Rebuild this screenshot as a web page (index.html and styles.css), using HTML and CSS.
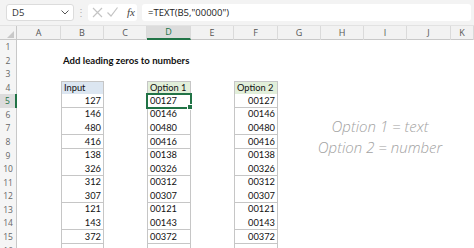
FILE: index.html
```html
<!DOCTYPE html>
<html lang="en">
<head>
    <meta charset="UTF-8">
    <title>Add leading zeros to numbers</title>
    <link rel="stylesheet" href="styles.css">
</head>
<body>
    <div class="window">
        <div class="formula-bar">
            <div class="name-box">
                <span>D5</span>
                <svg class="chev" width="8" height="5" viewBox="0 0 8 5"><path d="M0.5 0.5 L4 4 L7.5 0.5" fill="none" stroke="#555" stroke-width="1"/></svg>
            </div>
            <div class="grip">⋮</div>
            <div class="fx-tools">
                <svg width="11" height="11" viewBox="0 0 11 11"><path d="M1 1 L10 10 M10 1 L1 10" stroke="#c4c4c4" stroke-width="1.2"/></svg>
                <svg width="11" height="10" viewBox="0 0 11 10"><path d="M0.5 5.5 L4 9 L10.5 0.5" fill="none" stroke="#c4c4c4" stroke-width="1.2"/></svg>
                <span class="fx">fx</span>
            </div>
            <div class="formula">=TEXT(B5,"00000")</div>
        </div>

        <div class="sheet">
            <div class="colhead">
                <div class="corner"><svg width="7" height="7" viewBox="0 0 7 7"><path d="M7 0 L7 7 L0 7 Z" fill="#c8c8c8"/></svg></div>
                <div class="ch">A</div>
                <div class="ch">B</div>
                <div class="ch">C</div>
                <div class="ch active">D</div>
                <div class="ch">E</div>
                <div class="ch">F</div>
                <div class="ch">G</div>
                <div class="ch">H</div>
                <div class="ch">I</div>
                <div class="ch">J</div>
                <div class="ch">K</div>
            </div>

            <div class="row"><div class="rh">1</div></div>
            <div class="row short"><div class="rh">2</div><div class="title">Add leading zeros to numbers</div></div>
            <div class="row"><div class="rh">3</div></div>
            <div class="row short">
                <div class="rh">4</div>
                <div class="cell col-b head-blue top">Input</div>
                <div class="cell col-d head-green top">Option 1</div>
                <div class="cell col-f head-green top">Option 2</div>
            </div>
            <div class="row">
                <div class="rh sel">5</div>
                <div class="cell col-b num">127</div>
                <div class="cell col-d selected">00127<span class="handle"></span></div>
                <div class="cell col-f num">00127</div>
            </div>
            <div class="row short"><div class="rh">6</div><div class="cell col-b num">146</div><div class="cell col-d">00146</div><div class="cell col-f num">00146</div></div>
            <div class="row"><div class="rh">7</div><div class="cell col-b num">480</div><div class="cell col-d">00480</div><div class="cell col-f num">00480</div></div>
            <div class="row"><div class="rh">8</div><div class="cell col-b num">416</div><div class="cell col-d">00416</div><div class="cell col-f num">00416</div></div>
            <div class="row short"><div class="rh">9</div><div class="cell col-b num">138</div><div class="cell col-d">00138</div><div class="cell col-f num">00138</div></div>
            <div class="row"><div class="rh">10</div><div class="cell col-b num">326</div><div class="cell col-d">00326</div><div class="cell col-f num">00326</div></div>
            <div class="row short"><div class="rh">11</div><div class="cell col-b num">312</div><div class="cell col-d">00312</div><div class="cell col-f num">00312</div></div>
            <div class="row"><div class="rh">12</div><div class="cell col-b num">307</div><div class="cell col-d">00307</div><div class="cell col-f num">00307</div></div>
            <div class="row short"><div class="rh">13</div><div class="cell col-b num">121</div><div class="cell col-d">00121</div><div class="cell col-f num">00121</div></div>
            <div class="row"><div class="rh">14</div><div class="cell col-b num">143</div><div class="cell col-d">00143</div><div class="cell col-f num">00143</div></div>
            <div class="row"><div class="rh">15</div><div class="cell col-b num">372</div><div class="cell col-d">00372</div><div class="cell col-f num">00372</div></div>
            <div class="row"><div class="rh">16</div><div class="cell col-b num"></div><div class="cell col-d"></div><div class="cell col-f num"></div></div>

            <div class="note">
                <div>Option 1 = text</div>
                <div>Option 2 = number</div>
            </div>
        </div>
    </div>
</body>
</html>
```

FILE: styles.css
```css
body {
    margin: 0;
    background: #fff;
    font-family: Lato, "Open Sans", sans-serif;
}
.window {
    width: 474px;
    height: 248px;
    overflow: hidden;
}

/* formula bar */
.formula-bar {
    display: flex;
    align-items: center;
    height: 25px;
    padding: 0 3px 1px 6px;
    box-sizing: border-box;
    background: #f3f3f3;
    font-family: "Open Sans", sans-serif;
    font-size: 9.5px;
    color: #333;
}
.name-box {
    display: flex;
    align-items: center;
    justify-content: space-between;
    width: 68px;
    height: 17px;
    padding: 0 4px 0 5px;
    box-sizing: border-box;
    background: #fff;
    border: 1px solid #dcdcdc;
    border-radius: 3px;
}
.grip {
    width: 14px;
    text-align: center;
    color: #b0b0b0;
    font-size: 10px;
}
.fx-tools {
    display: flex;
    align-items: center;
    gap: 4px;
    width: 49px;
    height: 17px;
    padding-left: 4px;
    box-sizing: border-box;
    background: #fff;
    border-radius: 3px;
}
.fx {
    margin-left: 5px;
    font-family: "Liberation Serif", serif;
    font-style: italic;
    font-size: 11px;
    color: #444;
}
.formula {
    flex: 1;
    height: 17px;
    margin-left: 5px;
    padding-left: 6px;
    line-height: 17px;
    background: #fff;
    border-radius: 3px;
    color: #222;
}

/* sheet */
.sheet {
    position: relative;
}
.colhead, .row {
    display: grid;
    grid-template-columns: 17px 44px 43px 43px 44px 43px 44px 43px 43px 43px 44px 1fr;
}
.colhead {
    height: 15px;
    background: #f2f2f2;
    border-top: 1px solid #e2e2e2;
    border-bottom: 1px solid #c8c8c8;
    box-sizing: border-box;
    font-family: "Open Sans", sans-serif;
    font-size: 9px;
    color: #555;
}
.corner {
    display: flex;
    align-items: flex-end;
    justify-content: flex-end;
    padding: 0 2px 2px 0;
    border-right: 1px solid #c8c8c8;
}
.ch {
    text-align: center;
    line-height: 13px;
    border-right: 1px solid #dadada;
}
.ch.active {
    background: #dcdcdc;
    color: #217346;
    border-bottom: 2px solid #217346;
    line-height: 12px;
}
.row {
    height: 14px;
    font-size: 9.3px;
    color: #111;
}
.row.short {
    height: 13px;
}
.rh {
    grid-column: 1;
    background: #f5f5f5;
    border-right: 1px solid #c8c8c8;
    font-family: "Open Sans", sans-serif;
    font-size: 8.5px;
    color: #666;
    text-align: center;
    line-height: 13.5px;
}
.rh.sel {
    background: #dcdcdc;
    color: #217346;
    border-right: 2px solid #217346;
}
.title {
    grid-column: 3 / 8;
    padding-left: 2px;
    font-weight: bold;
    font-size: 9.6px;
    line-height: 13.5px;
}
.cell {
    position: relative;
    padding: 0 2px;
    line-height: 13px;
    border: 1px solid #c6c6c6;
    border-top: none;
    background: #fff;
    box-sizing: border-box;
}
.short .cell {
    line-height: 12px;
}
.cell.top {
    border-top: 1px solid #c6c6c6;
    line-height: 11px;
}
.col-b { grid-column: 3; }
.col-d { grid-column: 5; }
.col-f { grid-column: 7; }
.num { text-align: right; }
.head-blue { background: #dce6f1; }
.head-green { background: #e2efda; }
.cell.selected {
    outline: 2px solid #217346;
    outline-offset: -1px;
    z-index: 1;
}
.handle {
    position: absolute;
    right: -3px;
    bottom: -3px;
    width: 4px;
    height: 4px;
    background: #217346;
    border: 1px solid #fff;
}

/* floating text box */
.note {
    position: absolute;
    left: 300px;
    top: 91px;
    width: 160px;
    text-align: center;
    font-family: "Open Sans", sans-serif;
    font-style: italic;
    font-weight: 300;
    font-size: 15px;
    line-height: 21px;
    color: #a2a2a2;
}
```
